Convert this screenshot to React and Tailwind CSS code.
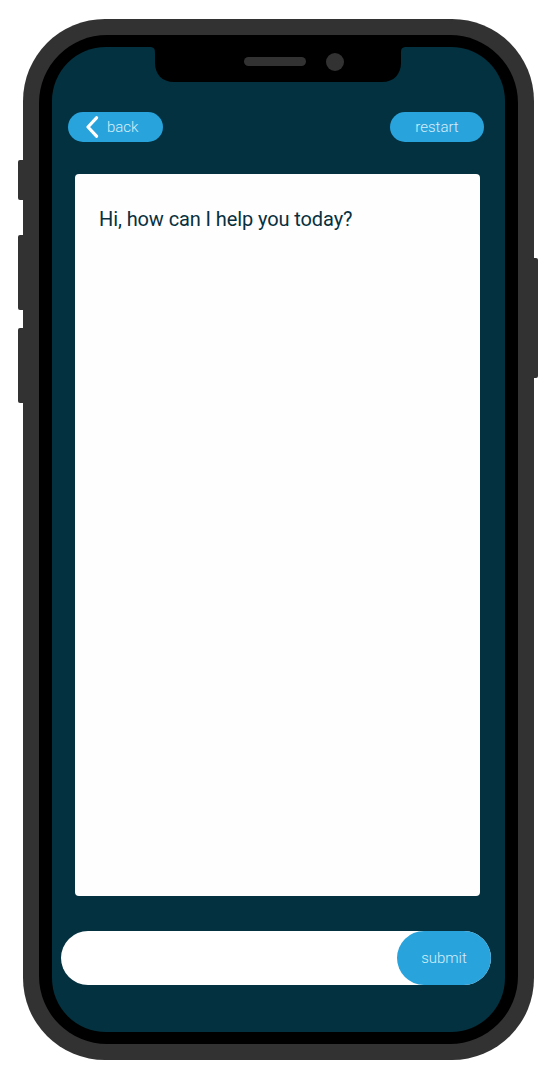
import React from "react";

function Notch() {
  return (
    <svg
      className="absolute left-[97px] top-0"
      width="258"
      height="36"
      viewBox="0 0 258 36"
    >
      <path
        d="M0 0 H258 C252 0 252 2 252 8 V16 C252 27 245 35 233 35 H25 C13 35 6 27 6 16 V8 C6 2 6 0 0 0 Z"
        fill="#000"
      />
      <rect x="95" y="10" width="62" height="9" rx="4.5" fill="#333232" />
      <circle cx="186" cy="15" r="9" fill="#333232" />
    </svg>
  );
}

export default function App() {
  return (
    <div
      className="w-[558px] h-[1080px] bg-white overflow-hidden"
      style={{ fontFamily: "Roboto, 'Liberation Sans', sans-serif" }}
    >
      <div className="relative ml-[23px] mt-[19px] w-[511px] h-[1041px] rounded-[82px] bg-[#333232] p-[16px]">
        {/* side buttons */}
        <div className="absolute left-[-5px] top-[141px] w-[5px] h-[40px] rounded-l-[2px] bg-[#333232]" />
        <div className="absolute left-[-5px] top-[216px] w-[5px] h-[75px] rounded-l-[2px] bg-[#333232]" />
        <div className="absolute left-[-5px] top-[309px] w-[5px] h-[75px] rounded-l-[2px] bg-[#333232]" />
        <div className="absolute right-[-4px] top-[239px] w-[4px] h-[120px] rounded-r-[2px] bg-[#333232]" />

        <div className="w-full h-full rounded-[68px] bg-black px-[13px] py-[12px]">
          <div className="relative w-full h-full rounded-[54px] bg-[#03313f] flex flex-col overflow-hidden">
            <Notch />

            <div className="flex items-center justify-between pl-[16px] pr-[21px] pt-[65px]">
              <button className="flex items-center h-[30px] w-[95px] rounded-full bg-[#29a3dc] pl-[16px] text-[15px] font-light text-[#d6eef9]">
                <svg width="18" height="22" viewBox="0 0 18 22" className="mr-[5px]">
                  <path
                    d="M12.5 1.8 L4 11 L12.5 20.2"
                    fill="none"
                    stroke="#fff"
                    strokeWidth="3.2"
                    strokeLinecap="round"
                    strokeLinejoin="round"
                  />
                </svg>
                <span className="leading-none">back</span>
              </button>
              <button className="flex items-center justify-center h-[30px] w-[94px] rounded-full bg-[#29a3dc] text-[15px] font-light text-[#d6eef9]">
                restart
              </button>
            </div>

            <div className="ml-[23px] mr-[25px] mt-[32px] h-[722px] rounded-[4px] bg-[#fefefe] px-[24px] pt-[31px]">
              <p className="text-[20px] leading-[28px] tracking-[-0.1px] text-[#08303f]">
                Hi, how can I help you today?
              </p>
            </div>

            <div className="ml-[9px] mr-[14px] mt-[35px] h-[54px] rounded-full bg-white flex justify-end">
              <button className="h-full w-[94px] rounded-full bg-[#29a3dc] text-[15px] font-light text-[#d6eef9] flex items-center justify-center">
                submit
              </button>
            </div>
          </div>
        </div>
      </div>
    </div>
  );
}
